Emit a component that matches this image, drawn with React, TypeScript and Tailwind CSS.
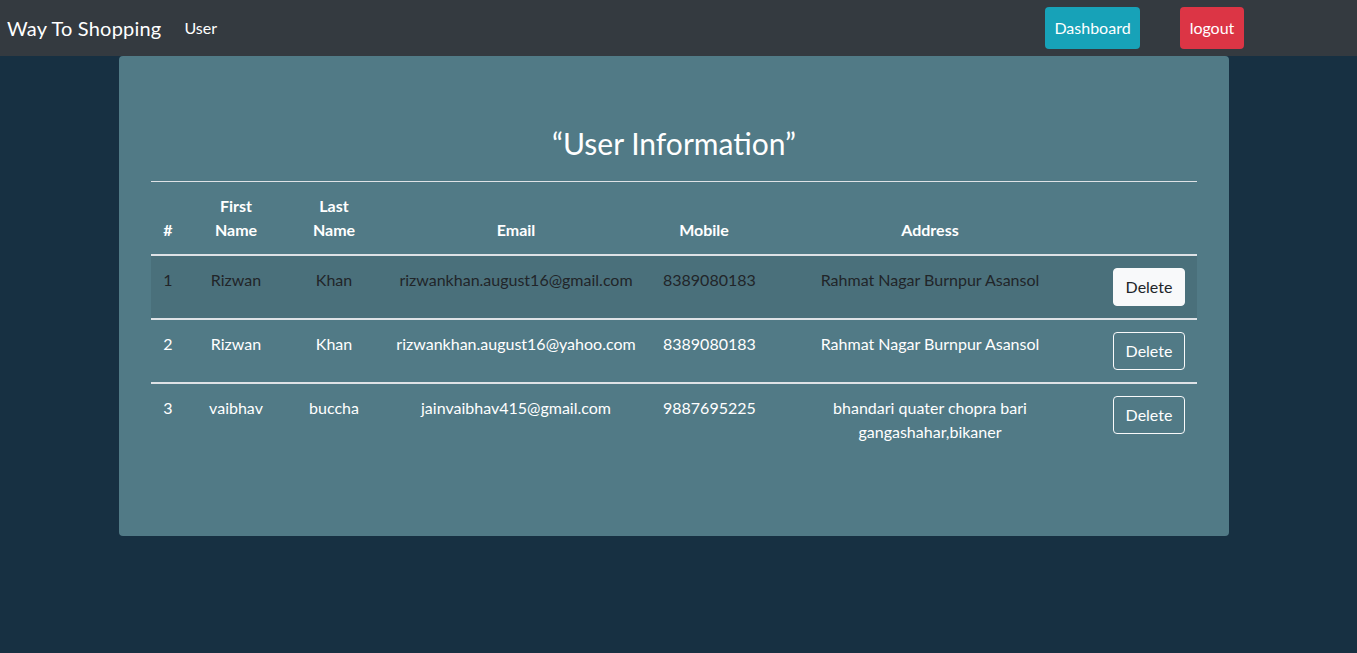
import React from "react";

type User = {
  id: number;
  firstName: string;
  lastName: string;
  email: string;
  mobile: string;
  address: string;
};

const users: User[] = [
  {
    id: 1,
    firstName: "Rizwan",
    lastName: "Khan",
    email: "rizwankhan.august16@gmail.com",
    mobile: "8389080183",
    address: "Rahmat Nagar Burnpur Asansol",
  },
  {
    id: 2,
    firstName: "Rizwan",
    lastName: "Khan",
    email: "rizwankhan.august16@yahoo.com",
    mobile: "8389080183",
    address: "Rahmat Nagar Burnpur Asansol",
  },
  {
    id: 3,
    firstName: "vaibhav",
    lastName: "buccha",
    email: "jainvaibhav415@gmail.com",
    mobile: "9887695225",
    address: "bhandari quater chopra bari gangashahar,bikaner",
  },
];

export default function App() {
  return (
    <div
      className="min-h-[653px] bg-[#173042] text-white"
      style={{ fontFamily: "Lato, 'Open Sans', sans-serif" }}
    >
      <nav className="h-14 bg-[#343a40] flex items-center">
        <span className="pl-[7px] text-[20px] leading-[30px] tracking-[0.2px]">Way To Shopping</span>
        <span className="ml-[23px] text-base">User</span>
        <div className="ml-auto mr-[113px] flex items-center gap-10">
          <button className="h-[42px] w-[95px] rounded bg-[#17a2b8] text-base">
            Dashboard
          </button>
          <button className="h-[42px] w-16 rounded bg-[#dc3545] text-base">
            logout
          </button>
        </div>
      </nav>

      <div className="w-[1110px] ml-[119px] bg-[#517a86] rounded px-8 pt-[68px] pb-[80px]">
        <h2 className="text-center text-[30px] leading-[38px] font-normal mb-[19px]">
          “User Information”
        </h2>
        <table className="w-full table-fixed border-collapse text-center text-base">
          <thead>
            <tr className="border-t border-[#dee2e6] border-b-2 border-b-[#dee2e6]">
              <th className="w-[34px] p-3 align-bottom font-bold leading-6">#</th>
              <th className="w-[102px] p-3 align-bottom font-bold leading-6">First Name</th>
              <th className="w-[94px] p-3 align-bottom font-bold leading-6">Last Name</th>
              <th className="w-[270px] p-3 align-bottom font-bold leading-6">Email</th>
              <th className="w-[106px] p-3 align-bottom font-bold leading-6">Mobile</th>
              <th className="w-[346px] p-3 align-bottom font-bold leading-6">Address</th>
              <th className="w-[94px] p-3 align-bottom"></th>
            </tr>
          </thead>
          <tbody>
            {users.map((u, i) => {
              const hover = i === 0;
              return (
                <tr
                  key={u.id}
                  className={
                    (i > 0 ? "border-t-2 border-[#dee2e6] " : "") +
                    (hover ? "bg-[#4a707b] text-[#212529]" : "")
                  }
                >
                  <td className="p-3 align-top leading-6">{u.id}</td>
                  <td className="p-3 align-top leading-6">{u.firstName}</td>
                  <td className="p-3 align-top leading-6">{u.lastName}</td>
                  <td className="p-3 align-top leading-6">{u.email}</td>
                  <td className="p-3 align-top leading-6">{u.mobile}</td>
                  <td className="p-3 align-top leading-6">{u.address}</td>
                  <td className="py-3 pl-[10px] pr-3 align-top text-left">
                    <button
                      className={
                        "h-[38px] w-[72px] rounded border text-base " +
                        (hover
                          ? "bg-[#f8f9fa] border-[#f8f9fa] text-[#212529]"
                          : "border-[#f8f9fa] text-white")
                      }
                    >
                      Delete
                    </button>
                  </td>
                </tr>
              );
            })}
          </tbody>
        </table>
      </div>
    </div>
  );
}
